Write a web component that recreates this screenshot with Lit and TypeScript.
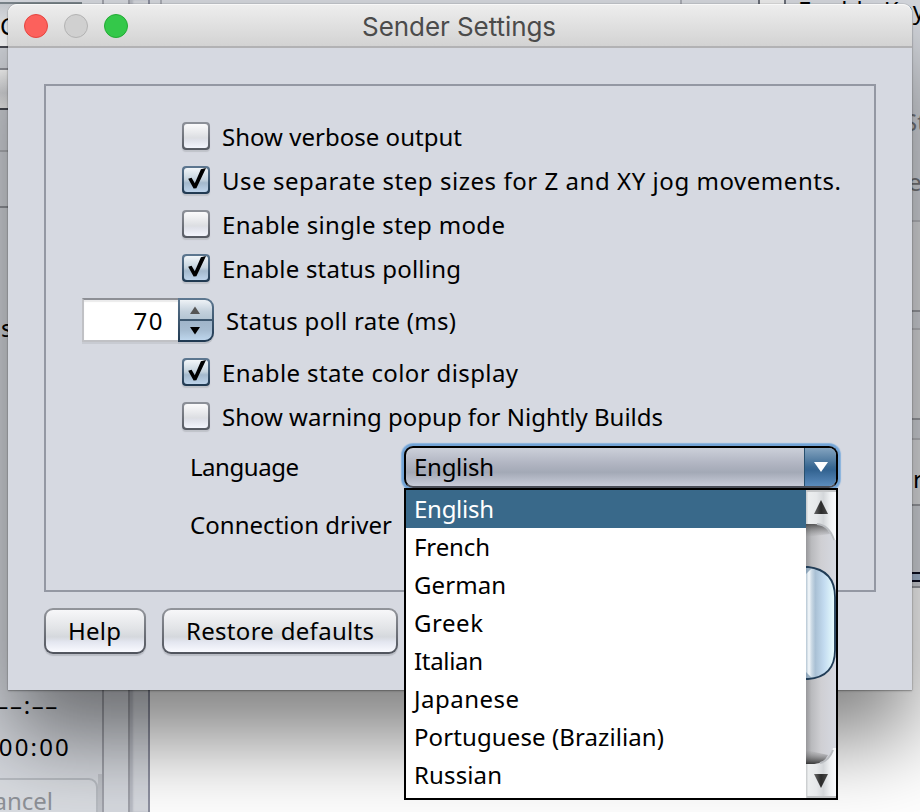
import { LitElement, html, css, svg } from "lit";
import { customElement, property } from "lit/decorators.js";
import { classMap } from "lit/directives/class-map.js";
import { styleMap } from "lit/directives/style-map.js";

const ruler = document.createElement("canvas").getContext("2d")!;

/** A single line of text tracked out to a given width. */
@customElement("tracked-text")
class TrackedText extends LitElement {
  @property() text = "";
  @property({ type: Number }) width = 0;
  @property() font = '24px "Noto Sans"';

  static styles = css`
    :host { display: inline-block; white-space: pre; }
    .t { display: block; }
  `;

  render() {
    ruler.font = this.font;
    const natural = ruler.measureText(this.text).width;
    const gap = this.text.length > 1 ? (this.width - natural) / (this.text.length - 1) : 0;
    return html`<span class="t" style=${styleMap({ letterSpacing: gap.toFixed(3) + "px" })}>${this.text}</span>`;
  }
}

@customElement("nimbus-check")
class NimbusCheck extends LitElement {
  @property({ type: Boolean }) checked = false;
  @property() label = "";
  @property({ type: Number }) width = 0;

  static styles = css`
    :host { display: flex; align-items: center; height: 44px; padding-left: 136px; }
    .edge {
      width: 28px; height: 28px; box-sizing: border-box; padding: 2px; border-radius: 4px;
      background: linear-gradient(#8e929a, #555962); box-shadow: 0 2px 1px #bfc2c9;
      margin: -2px 12px 0 0; flex: none;
    }
    .edge.on { background: linear-gradient(#5e7891, #1f3850); }
    .face { display: flex; height: 24px; border-radius: 3px; background: linear-gradient(#fbfbfc, #dcdee2 58%, #dfe1e9 66%, #f3f5fd); }
    .on .face { background: linear-gradient(#f2f6f9, #c5d3de 48%, #a4b9cd 62%, #bdd3ea); }
    svg { display: block; margin: -2px; width: 28px; height: 28px; flex: none; }
  `;

  render() {
    return html`
      <div class=${classMap({ edge: true, on: this.checked })}>
        <div class="face">
          ${this.checked
            ? html`<svg viewBox="0 0 28 28">${svg`<path d="M6.2 12.8 9.6 11.8 12.8 17.2 18.9 3.2 24 2 14.4 22.2 11.6 22.6Z" />`}</svg>`
            : ""}
        </div>
      </div>
      <tracked-text .text=${this.label} .width=${this.width}></tracked-text>
    `;
  }
}

const LANGUAGES: [string, number][] = [
  ["English", 80], ["French", 76], ["German", 92], ["Greek", 69], ["Italian", 69],
  ["Japanese", 105], ["Portuguese (Brazilian)", 250], ["Russian", 88],
];

const LEFT_BANDS = ["cap", "field", "line-d", "gap1", "line-m", "btn", "line-d", "gap2", "line-l", "gap3", "line-m"];
const RIGHT_BANDS = ["r-top", "line", "r-a", "line d", "r-g", "line", "r-a", "line d", "r-g2", "line", "r-b", "line d", "r-g3", "ink", "blue", "ink", "r-g4", "line d"];

@customElement("app-root")
class AppRoot extends LitElement {
  static styles = css`
    * { box-sizing: border-box; }
    :host {
      display: block; position: relative; width: 920px; height: 812px; overflow: hidden;
      font: 24px/38px "Noto Sans", sans-serif; color: #000; background: #d6d9df;
    }
    .desk { display: flex; height: 812px; }
    .strip { width: 102px; flex: none; display: flex; flex-direction: column; }
    .cap { height: 4px; width: 82px; border-bottom: 2px solid #7b858b; }
    .field { height: 42px; background: linear-gradient(#c9ccd1, #f3f5f8 70%, #fff); }
    .line-d { height: 2px; background: #4a4c54; }
    .line-m { height: 2px; background: #93959c; }
    .line-l { height: 2px; background: #b3b5ba; }
    .gap1 { height: 20px; }
    .btn { height: 38px; background: linear-gradient(#fff, #dcdde0 60%, #f5f5f5); }
    .gap2 { height: 40px; }
    .gap3 { height: 54px; }
    .times { margin-top: auto; display: flex; flex-direction: column; align-items: flex-end; height: 88px; }
    .times .a { padding-right: 43px; height: 42px; }
    .times .b { padding-right: 31px; height: 42px; }
    .cancel {
      height: 38px; flex: none; border-right: 4px solid #c0c3c9; padding-top: 4px; overflow: hidden;
    }
    .cancel div {
      height: 44px; border: 2px solid #b8bcc2; border-radius: 0 9px 0 0; border-left: 0; background: #d9dce1;
      color: #8e9197; display: flex; justify-content: flex-end; padding-right: 43px; line-height: 42px;
    }
    .rail1 { width: 26px; border-left: 2px solid #a0a2aa; }
    .rail2 { width: 22px; border-left: 2px solid #a0a2aa; box-shadow: inset 3px 0 2px #b9bcc4; border-right: 2px solid #8d90a0; }
    .canvas { flex: 1; background: #fff; border-top: 8px solid #d6d9df; }
    .side { width: 12px; flex: none; display: flex; flex-direction: column; }
    .sheet { flex: 1; background: #fff; }
    .r-top { height: 220px; }
    .line { height: 2px; background: #bcbdc2; }
    .line.d { background: #9d9fa5; }
    .r-a { height: 88px; background: #dedfe2; }
    .r-g { height: 16px; }
    .r-g2 { height: 18px; }
    .r-b { height: 64px; background: #e2e3e6; }
    .r-g3 { height: 66px; }
    .ink { height: 2px; background: #0b0d20; }
    .blue { height: 6px; background: #a9bdd6; }
    .r-g4 { height: 4px; }
    .peek { position: absolute; }
    .key { left: 798px; top: -9px; }
    .tick { left: 758px; top: -20px; width: 28px; height: 28px; border: 2px solid #6c707a; background: #eee; }
    .s { left: 1px; top: 309px; }
    .c { left: 0; top: 7px; }
    .st { left: 904px; top: 103px; color: #77787c; }
    .e { left: 908px; top: 163px; color: #77787c; }
    .r { left: 913px; top: 460px; }
    .seam { top: 0; height: 8px; width: 2px; background: #a9acb4; }
    .seam.one { left: 160px; }
    .seam.two { left: 680px; }

    .window {
      position: absolute; left: 8px; top: 4px; width: 904px; height: 686px; background: #d6d9e1;
      border-radius: 9px 9px 0 0;
      box-shadow: 0 0 1px rgba(0,0,0,.65), 0 1px 2px rgba(0,0,0,.3), 0 49px 86px rgba(0,0,0,.5);
    }
    .title {
      height: 44px; display: grid; grid-template-columns: 120px 1fr 120px; align-items: center;
      background: linear-gradient(#eeeeee, #d3d3d3); border-bottom: 2px solid #b2b2b4;
      border-radius: 9px 9px 0 0; box-shadow: inset 0 1px 0 #f8f8f8;
    }
    .lights { display: flex; gap: 16px; padding-left: 16px; }
    .light { width: 24px; height: 24px; border-radius: 50%; border: 1px solid #b3b3b3; background: #d0d0d0; }
    .light.red { background: #fc615c; border-color: #e5443f; }
    .light.green { background: #34c84a; border-color: #22ab34; }
    .name { font: 26px/42px Inter, sans-serif; color: #4b4b4b; text-align: center; padding: 2px 2px 0 0; }
    .panel { margin: 36px 36px 0; height: 508px; border: 2px solid #9498a3; padding-top: 29px; }
    .poll { height: 60px; display: flex; align-items: center; padding-left: 36px; }
    .num {
      width: 96px; height: 44px; margin-top: -2px; background: #fff; border: 2px solid #c0c1c5; border-top-color: #8d8f95; border-right: 0;
      text-align: right; padding-right: 14px; line-height: 42px; box-shadow: 0 2px 0 #c8cbd2, inset 0 2px 1px #ebebec;
    }
    .spin {
      width: 36px; height: 44px; margin: -2px 12px 0 0; padding: 2px; border-radius: 0 9px 9px 0;
      background: linear-gradient(#5e7891, #1f3850); box-shadow: 0 2px 0 #bbbfc7;
      display: flex; flex-direction: column; gap: 2px;
    }
    .half { height: 19px; display: flex; align-items: center; justify-content: center; }
    .half.up { background: linear-gradient(#eef2f6, #c3d0dc 60%, #b4c5d3); border-radius: 0 7px 0 0; padding: 0 2px 0 0; }
    .half.dn { background: linear-gradient(#9fb4c9, #a7bdd2 50%, #bdd5ec); border-radius: 0 0 7px 0; padding: 0 2px 0 0; }
    .half svg { width: 10px; height: 8px; display: block; }
    .row { display: flex; align-items: center; padding-left: 144px; }
    .lang { height: 56px; }
    .driver { height: 60px; }
    .lang > tracked-text { width: 214px; }
    .combo {
      width: 434px; height: 42px; border: 2px solid #000; border-bottom-color: #4a4e58; border-radius: 9px;
      box-shadow: 0 0 0 2px #73a4d6, 0 0 1px 3px #88b2dd; display: flex; justify-content: space-between; overflow: hidden;
      background: linear-gradient(#ccd0d9, #b0b4c1 42%, #a3a9b6 64%, #c8ccd9);
    }
    .combo tracked-text { padding-left: 8px; }
    .drop {
      width: 32px; border-left: 1px solid #28506f; display: flex; align-items: center; justify-content: center;
      background: linear-gradient(#83a3bf, #396892 50%, #336391 58%, #5b8cbd);
    }
    .drop svg { width: 14px; height: 10px; }
    .buttons { display: flex; gap: 16px; padding: 16px 36px 0; }
    .push { height: 46px; border-radius: 9px; padding: 2px; background: linear-gradient(#92959b, #50545d); box-shadow: 0 2px 1px #b9bcc4; }
    .push div {
      height: 42px; border-radius: 7px; line-height: 42px; background: linear-gradient(#f7f7f9, #e1e3e6 45%, #d5d8dd 64%, #e3e6f0 76%, #f9faff);
    }
    .help { width: 102px; }
    .help div { padding-left: 22px; }
    .restore { width: 236px; }
    .restore div { padding-left: 22px; }

    .popup {
      position: absolute; left: 404px; top: 488px; width: 434px; height: 312px; border: 2px solid #000; background: #fff; display: flex;
    }
    .list { width: 400px; }
    .item { height: 38px; padding-left: 8px; }
    .item.sel { background: #39698a; color: #fff; }
    .bar { width: 30px; height: 308px; display: block; }
  `;

  private band = (name: string) => html`<div class=${name}></div>`;

  private scrollbar() {
    return html`<svg class="bar" viewBox="0 0 30 308">
      <defs>
        <linearGradient id="track"><stop offset="0" stop-color="#98989b" /><stop offset=".18" stop-color="#b9babd" /><stop offset=".5" stop-color="#cfcfd3" /><stop offset="1" stop-color="#d6d9e1" /></linearGradient>
        <linearGradient id="cap"><stop offset="0" stop-color="#c5c8ca" /><stop offset=".08" stop-color="#eceeef" /><stop offset=".35" stop-color="#e6e8ea" /><stop offset=".58" stop-color="#d4d7da" /><stop offset=".8" stop-color="#eff1f3" /><stop offset="1" stop-color="#fafbfd" /></linearGradient>
        <linearGradient id="thumb" gradientUnits="userSpaceOnUse" x1="0" x2="29" y1="0" y2="0"><stop offset="0" stop-color="#b5c6d3" /><stop offset=".1" stop-color="#f5f9fc" /><stop offset=".2" stop-color="#c9d8e4" /><stop offset=".32" stop-color="#a9c0d4" /><stop offset=".62" stop-color="#c3dbf0" /><stop offset="1" stop-color="#eaffff" /></linearGradient>
        <linearGradient id="shade" x2="0" y2="1"><stop offset="0" stop-color="#333" stop-opacity=".75" /><stop offset="1" stop-color="#777" stop-opacity="0" /></linearGradient>
        <linearGradient id="shadeUp" x2="0" y1="1" y2="0"><stop offset="0" stop-color="#222" stop-opacity=".85" /><stop offset="1" stop-color="#777" stop-opacity="0" /></linearGradient>
        <linearGradient id="arrow"><stop offset="0" stop-color="#6a6a6a" /><stop offset=".5" stop-color="#2a2a2a" /><stop offset="1" stop-color="#4a4a4a" /></linearGradient>
      </defs>
      <rect width="30" height="308" fill="url(#track)" />
      <path d="M0 34H14Q21 36 24 44L0 47Z" fill="url(#shade)" />
      <path d="M0 0H30V50H27Q22 34 8 34H0Z" fill="url(#cap)" />
      <path d="M28 50Q23 35 11 34" fill="none" stroke="#b9bcc0" stroke-width="2" />
      <path d="M0 1H30" stroke="#c6c8ca" stroke-width="2" />
      <path d="M15 10 22 24H8Z" fill="url(#arrow)" />
      <path d="M-12 77H2Q29 80 29 107V160Q29 187 2 189H-12Z" fill="url(#thumb)" stroke="#203c56" stroke-width="1.8" />
      <path d="M0 78H6L0 84ZM0 188H6L0 182Z" fill="#6d8ba4" opacity=".65" />
      <path d="M0 260 22 265Q18 273 9 274H0Z" fill="url(#shadeUp)" />
      <path d="M0 308V274H8Q22 274 27 258H30V308Z" fill="url(#cap)" />
      <path d="M27 260Q23 271 14 273" fill="none" stroke="#b9bcc0" stroke-width="2" />
      <path d="M1 307H30" stroke="#c1c3c5" stroke-width="2" />
      <path d="M15 298 22 284H8Z" fill="url(#arrow)" />
    </svg>`;
  }

  render() {
    return html`
      <div class="desk">
        <div class="strip">
          ${LEFT_BANDS.map(this.band)}
          <div class="times">
            <tracked-text class="a" .text=${"––:––"} .width=${61}></tracked-text>
            <tracked-text class="b" .text=${"00:00"} .width=${70}></tracked-text>
          </div>
          <div class="cancel"><div>Cancel</div></div>
        </div>
        <div class="rail1"></div>
        <div class="rail2"></div>
        <div class="canvas"></div>
        <div class="side">${RIGHT_BANDS.map(this.band)}<div class="sheet"></div></div>
      </div>
      <div class="peek seam one"></div>
      <div class="peek seam two"></div>
      <div class="peek tick"></div>
      <tracked-text class="peek key" .text=${"Enable Key"} .width=${127}></tracked-text>
      <div class="peek c">C</div>
      <div class="peek s">s</div>
      <div class="peek st">St</div>
      <div class="peek e">e</div>
      <div class="peek r">r</div>

      <div class="window">
        <div class="title">
          <div class="lights"><div class="light red"></div><div class="light"></div><div class="light green"></div></div>
          <div class="name"><tracked-text .text=${"Sender Settings"} .width=${194} font="26px Inter"></tracked-text></div>
        </div>
        <div class="panel">
          <nimbus-check label="Show verbose output" width="240"></nimbus-check>
          <nimbus-check checked label="Use separate step sizes for Z and XY jog movements." width="619"></nimbus-check>
          <nimbus-check label="Enable single step mode" width="283"></nimbus-check>
          <nimbus-check checked label="Enable status polling" width="239"></nimbus-check>
          <div class="poll">
            <div class="num"><tracked-text .text=${"70"} .width=${29}></tracked-text></div>
            <div class="spin">
              <div class="half up"><svg viewBox="0 0 10 8"><path d="M5 .5 10 8H0Z" fill="#555" /></svg></div>
              <div class="half dn"><svg viewBox="0 0 10 8"><path d="M5 7.5 10 0H0Z" /></svg></div>
            </div>
            <tracked-text .text=${"Status poll rate (ms)"} .width=${230}></tracked-text>
          </div>
          <nimbus-check checked label="Enable state color display" width="296"></nimbus-check>
          <nimbus-check label="Show warning popup for Nightly Builds" width="441"></nimbus-check>
          <div class="row lang">
            <tracked-text .text=${"Language"} .width=${109}></tracked-text>
            <div class="combo">
              <tracked-text .text=${"English"} .width=${80}></tracked-text>
              <div class="drop"><svg viewBox="0 0 14 10"><path d="M0 0H14L7 10Z" fill="#fff" /></svg></div>
            </div>
          </div>
          <div class="row driver"><tracked-text .text=${"Connection driver"} .width=${202}></tracked-text></div>
        </div>
        <div class="buttons">
          <div class="push help"><div><tracked-text .text=${"Help"} .width=${53}></tracked-text></div></div>
          <div class="push restore"><div><tracked-text .text=${"Restore defaults"} .width=${188}></tracked-text></div></div>
        </div>
      </div>

      <div class="popup">
        <div class="list">
          ${LANGUAGES.map(([name, width], i) => html`
            <div class=${classMap({ item: true, sel: i === 0 })}><tracked-text .text=${name} .width=${width}></tracked-text></div>`)}
        </div>
        ${this.scrollbar()}
      </div>
    `;
  }
}
